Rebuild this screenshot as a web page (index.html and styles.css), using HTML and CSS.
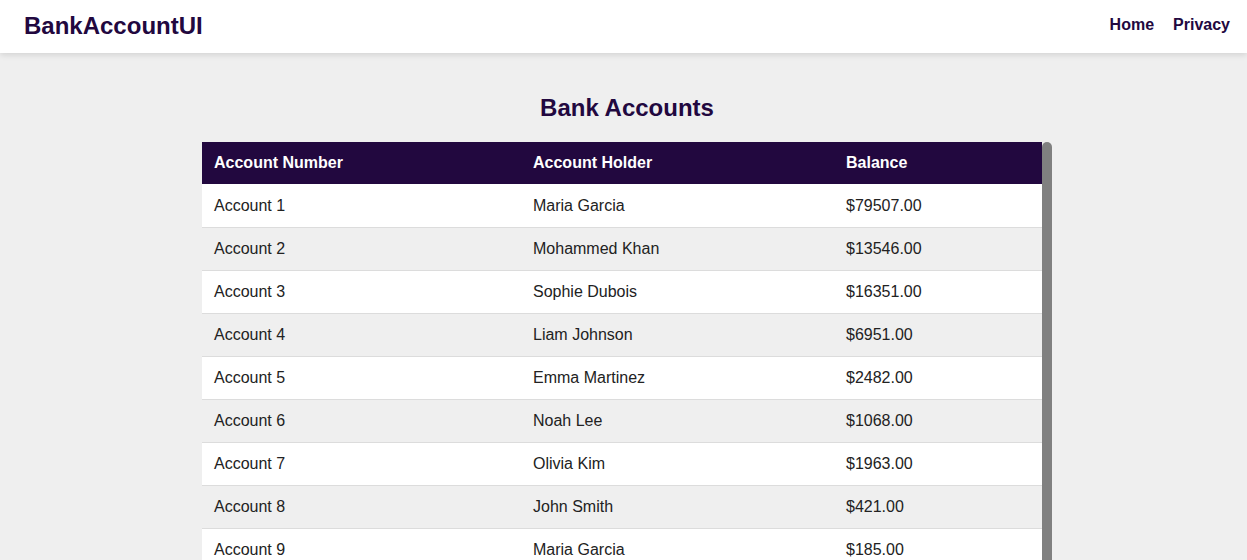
FILE: index.html
```html
<!DOCTYPE html>
<html lang="en">
<head>
<meta charset="utf-8">
<title>BankAccountUI</title>
<link rel="stylesheet" href="styles.css">
</head>
<body>
<header class="navbar">
  <a class="brand" href="#">BankAccountUI</a>
  <nav class="nav">
    <a href="#">Home</a>
    <a href="#">Privacy</a>
  </nav>
</header>
<main class="page">
  <h1 class="title">Bank Accounts</h1>
  <div class="table-wrap">
    <table class="accounts">
      <thead>
        <tr><th class="c1">Account Number</th><th class="c2">Account Holder</th><th class="c3">Balance</th></tr>
      </thead>
      <tbody>
        <tr><td>Account 1</td><td>Maria Garcia</td><td>$79507.00</td></tr>
        <tr><td>Account 2</td><td>Mohammed Khan</td><td>$13546.00</td></tr>
        <tr><td>Account 3</td><td>Sophie Dubois</td><td>$16351.00</td></tr>
        <tr><td>Account 4</td><td>Liam Johnson</td><td>$6951.00</td></tr>
        <tr><td>Account 5</td><td>Emma Martinez</td><td>$2482.00</td></tr>
        <tr><td>Account 6</td><td>Noah Lee</td><td>$1068.00</td></tr>
        <tr><td>Account 7</td><td>Olivia Kim</td><td>$1963.00</td></tr>
        <tr><td>Account 8</td><td>John Smith</td><td>$421.00</td></tr>
        <tr><td>Account 9</td><td>Maria Garcia</td><td>$185.00</td></tr>
      </tbody>
    </table>
    <div class="scrollbar"></div>
  </div>
</main>
</body>
</html>
```
FILE: styles.css
```css
html, body {
  margin: 0;
  padding: 0;
}
body {
  background: #efefef;
  font-family: "Liberation Sans", Arial, sans-serif;
  color: #222;
  overflow: hidden;
  height: 560px;
}
.navbar {
  height: 53px;
  box-sizing: border-box;
  background: #fff;
  box-shadow: 0 2px 6px rgba(0,0,0,0.12);
  display: flex;
  align-items: center;
  justify-content: space-between;
  padding: 0 17px 4px 24px;
  position: relative;
  z-index: 1;
}
.brand {
  font-size: 24px;
  font-weight: bold;
  color: #22083f;
  text-decoration: none;
  margin-top: 3px;
}
.nav {
  display: flex;
  gap: 19px;
}
.nav a {
  font-size: 16px;
  font-weight: bold;
  color: #22083f;
  text-decoration: none;
}
.page {
  width: 850px;
  margin: 0 auto;
  padding-left: 7px;
}
.title {
  margin: 0;
  padding-top: 40px;
  height: 49px;
  text-align: center;
  font-size: 24px;
  font-weight: bold;
  color: #22083f;
  line-height: 30px;
}
.table-wrap {
  display: flex;
  align-items: flex-start;
}
.accounts {
  width: 840px;
  border-collapse: collapse;
  font-size: 16px;
}
.accounts th {
  background: #22083f;
  color: #fff;
  text-align: left;
  font-weight: bold;
  height: 42px;
  padding: 0 12px;
  box-sizing: border-box;
}
.c1 { width: 319px; }
.c2 { width: 313px; }
.c3 { width: 208px; }
.accounts td {
  height: 43px;
  padding: 1px 12px 0;
  box-sizing: border-box;
  border-bottom: 1px solid #dcdcdc;
  color: #222;
}
.accounts tbody tr:nth-child(odd) { background: #fff; }
.accounts tbody tr:nth-child(even) { background: #efefef; }
.scrollbar {
  width: 10px;
  height: 430px;
  background: #808080;
  border-radius: 5px 5px 0 0;
  flex: none;
}
```
